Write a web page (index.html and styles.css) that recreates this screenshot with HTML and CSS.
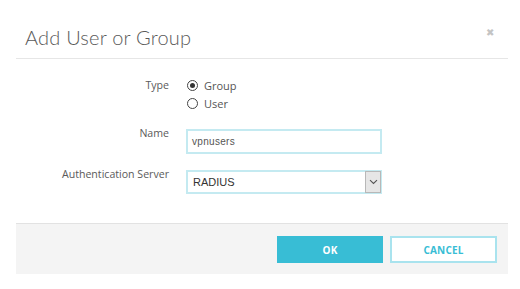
FILE: index.html
```html
<!DOCTYPE html>
<html>
<head>
<meta charset="utf-8">
<link rel="stylesheet" href="styles.css">
</head>
<body>
<div class="dialog">
  <div class="header">
    <h1 class="title">Add User or Group</h1>
    <span class="close">&#x2716;</span>
  </div>
  <div class="form">
    <div class="label label-top">Type</div>
    <div class="radios">
      <div class="radio"><span class="dot checked"></span><span>Group</span></div>
      <div class="radio"><span class="dot"></span><span>User</span></div>
    </div>
    <div class="label">Name</div>
    <div class="input">vpnusers</div>
    <div class="label">Authentication Server</div>
    <div class="select"><span class="sel-text">RADIUS</span><span class="arrow"><svg width="9" height="6" viewBox="0 0 9 6"><path d="M1 1.2 L4.5 4.5 L8 1.2" fill="none" stroke="#555" stroke-width="1.1"/></svg></span></div>
  </div>
  <div class="footer">
    <div class="btn ok">OK</div>
    <div class="btn cancel">CANCEL</div>
  </div>
</div>
</body>
</html>
```
FILE: styles.css
```css
html, body {
  margin: 0;
  padding: 0;
  background: #fff;
  font-family: "Open Sans", "Liberation Sans", sans-serif;
}
.dialog {
  width: 492px;
  margin-left: 16px;
}
.header {
  height: 58px;
  border-bottom: 1px solid #e6e6e6;
  display: flex;
  justify-content: space-between;
  align-items: flex-start;
  padding: 0 14px 0 9px;
  box-sizing: content-box;
}
.title {
  margin: 25px 0 0 0;
  font-family: "Lato", "Open Sans", sans-serif;
  font-weight: 300;
  font-size: 20px;
  line-height: 24px;
  color: #5a5a5a;
  letter-spacing: 0.2px;
}
.close {
  margin-top: 26px;
  font-size: 10px;
  color: #c4c4c4;
  line-height: 12px;
}
.form {
  display: grid;
  grid-template-columns: 153px 196px;
  column-gap: 17px;
  padding-top: 17px;
}
.label {
  text-align: right;
  font-size: 10.6px;
  color: #5a5a5a;
  align-self: center;
}
.label-top {
  align-self: start;
  line-height: 18px;
}
.radios {
  display: flex;
  flex-direction: column;
}
.radio {
  height: 18px;
  display: flex;
  align-items: center;
  font-size: 11px;
  color: #555;
}
.dot {
  width: 9px;
  height: 9px;
  border: 1px solid #444;
  border-radius: 50%;
  margin: 0 6px 0 1px;
  position: relative;
  box-sizing: content-box;
}
.dot.checked::after {
  content: "";
  position: absolute;
  left: 2px;
  top: 2px;
  width: 5px;
  height: 5px;
  border-radius: 50%;
  background: #333;
}
.input {
  margin-top: 17px;
  height: 21px;
  border: 2px solid #c4eaf1;
  font-family: "Liberation Sans", Arial, sans-serif;
  font-size: 10px;
  color: #555;
  letter-spacing: 0.3px;
  line-height: 21px;
  padding-left: 4px;
  box-sizing: content-box;
  width: 188px;
}
.select {
  margin-top: 16px;
  height: 20px;
  border: 2px solid #c4eaf1;
  display: flex;
  align-items: stretch;
  justify-content: space-between;
  width: 192px;
  box-sizing: content-box;
}
.sel-text {
  font-family: "Liberation Sans", Arial, sans-serif;
  font-size: 11px;
  color: #333;
  line-height: 20px;
  padding-left: 5px;
}
.arrow {
  width: 14px;
  background: #e6e6e6;
  border: 1px solid #b8b8b8;
  display: flex;
  align-items: center;
  justify-content: center;
  margin: -1px -1px -1px 0;
}
.footer {
  margin-top: 29px;
  height: 38px;
  border-top: 1px solid #e2e2e2;
  background: #f4f4f4;
  display: flex;
  justify-content: flex-end;
  gap: 7px;
  padding: 12px 11px 0 0;
  box-sizing: content-box;
}
.btn {
  height: 27px;
  box-sizing: border-box;
  display: flex;
  align-items: center;
  justify-content: center;
  font-size: 10px;
  font-weight: 700;
  letter-spacing: 0.2px;
}
.ok {
  width: 106px;
  background: #38bdd5;
  color: #fff;
}
.cancel {
  width: 107px;
  background: #fff;
  border: 2px solid #a9e3ee;
  color: #38bdd5;
}
```
